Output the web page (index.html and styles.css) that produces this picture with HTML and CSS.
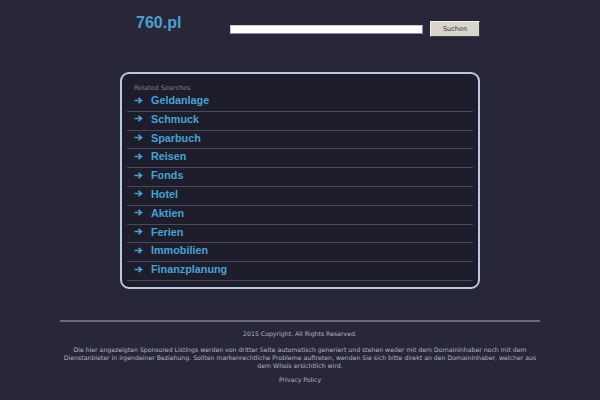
FILE: index.html
```html
<!DOCTYPE html>
<html>
<head>
<meta charset="utf-8">
<link rel="stylesheet" href="styles.css">
</head>
<body>
<div class="header">
  <div class="logo">760.pl</div>
  <input class="search" type="text">
  <button class="btn">Suchen</button>
</div>
<div class="box">
  <div class="label">Related Searches</div>
  <ul class="list">
    <li class="row"><svg class="arrow" viewBox="0 0 9 7"><path d="M0.5 3.5H7.5M4.5 0.8L7.5 3.5L4.5 6.2" fill="none" stroke="currentColor" stroke-width="1.6"/></svg><span>Geldanlage</span></li>
    <li class="row"><svg class="arrow" viewBox="0 0 9 7"><path d="M0.5 3.5H7.5M4.5 0.8L7.5 3.5L4.5 6.2" fill="none" stroke="currentColor" stroke-width="1.6"/></svg><span>Schmuck</span></li>
    <li class="row"><svg class="arrow" viewBox="0 0 9 7"><path d="M0.5 3.5H7.5M4.5 0.8L7.5 3.5L4.5 6.2" fill="none" stroke="currentColor" stroke-width="1.6"/></svg><span>Sparbuch</span></li>
    <li class="row"><svg class="arrow" viewBox="0 0 9 7"><path d="M0.5 3.5H7.5M4.5 0.8L7.5 3.5L4.5 6.2" fill="none" stroke="currentColor" stroke-width="1.6"/></svg><span>Reisen</span></li>
    <li class="row"><svg class="arrow" viewBox="0 0 9 7"><path d="M0.5 3.5H7.5M4.5 0.8L7.5 3.5L4.5 6.2" fill="none" stroke="currentColor" stroke-width="1.6"/></svg><span>Fonds</span></li>
    <li class="row"><svg class="arrow" viewBox="0 0 9 7"><path d="M0.5 3.5H7.5M4.5 0.8L7.5 3.5L4.5 6.2" fill="none" stroke="currentColor" stroke-width="1.6"/></svg><span>Hotel</span></li>
    <li class="row"><svg class="arrow" viewBox="0 0 9 7"><path d="M0.5 3.5H7.5M4.5 0.8L7.5 3.5L4.5 6.2" fill="none" stroke="currentColor" stroke-width="1.6"/></svg><span>Aktien</span></li>
    <li class="row"><svg class="arrow" viewBox="0 0 9 7"><path d="M0.5 3.5H7.5M4.5 0.8L7.5 3.5L4.5 6.2" fill="none" stroke="currentColor" stroke-width="1.6"/></svg><span>Ferien</span></li>
    <li class="row"><svg class="arrow" viewBox="0 0 9 7"><path d="M0.5 3.5H7.5M4.5 0.8L7.5 3.5L4.5 6.2" fill="none" stroke="currentColor" stroke-width="1.6"/></svg><span>Immobilien</span></li>
    <li class="row"><svg class="arrow" viewBox="0 0 9 7"><path d="M0.5 3.5H7.5M4.5 0.8L7.5 3.5L4.5 6.2" fill="none" stroke="currentColor" stroke-width="1.6"/></svg><span>Finanzplanung</span></li>
  </ul>
</div>
<div class="footer">
  <div class="rule"></div>
  <p class="copy">2015 Copyright. All Rights Reserved.</p>
  <p class="disc">Die hier angezeigten Sponsored Listings werden von dritter Seite automatisch generiert und stehen weder mit dem Domaininhaber noch mit dem Dienstanbieter in irgendeiner Beziehung. Sollten markenrechtliche Probleme auftreten, wenden Sie sich bitte direkt an den Domaininhaber, welcher aus dem Whois ersichtlich wird.</p>
  <p class="privacy">Privacy Policy</p>
</div>
</body>
</html>
```
FILE: styles.css
```css
html, body {
  margin: 0;
  padding: 0;
  background: #282739;
  font-family: "DejaVu Sans", sans-serif;
}
.header {
  width: 360px;
  margin: 0 auto;
  padding-top: 14px;
  display: flex;
  align-items: flex-start;
}
.logo {
  margin-left: 16px;
  width: 94px;
  font-family: "Liberation Sans", Arial, sans-serif;
  font-weight: bold;
  font-size: 16px;
  line-height: 18px;
  color: #4b9fd0;
}
.search {
  box-sizing: border-box;
  width: 193px;
  height: 9px;
  margin: 11px 7px 0 0;
  padding: 0;
  border: 1px solid #8d8c98;
  border-top-color: #c8c8cc;
  border-left-color: #c8c8cc;
  background: #fff;
}
.btn {
  box-sizing: border-box;
  width: 50px;
  height: 16px;
  margin-top: 7px;
  padding: 0;
  border: 1px solid #f2f0ea;
  border-right-color: #3b3a48;
  border-bottom-color: #3b3a48;
  background: #d9d5cd;
  color: #333;
  font-family: "DejaVu Sans", sans-serif;
  font-size: 6.5px;
}
.box {
  box-sizing: border-box;
  width: 360px;
  margin: 35px auto 0;
  border: 2px solid #b7cbdd;
  border-radius: 9px;
  background: #1e1d2b;
  padding: 0 5px 6px;
}
.label {
  padding: 10px 0 1px 7px;
  font-size: 6.5px;
  line-height: 8px;
  color: #7e7d8a;
}
.list {
  list-style: none;
  margin: 0;
  padding: 0;
}
.row {
  box-sizing: border-box;
  height: 18.8px;
  border-bottom: 1px solid #4a495c;
  display: flex;
  align-items: flex-start;
  padding: 1px 0 0 7px;
  color: #47a2d2;
}
.arrow {
  width: 9px;
  height: 7px;
  margin: 2.5px 8px 0 0;
  flex: none;
}
.row span {
  font-family: "Liberation Sans", Arial, sans-serif;
  font-weight: bold;
  font-size: 10.8px;
  line-height: 12px;
}
.footer {
  width: 480px;
  margin: 31px auto 0;
  text-align: center;
  color: #b6b5c2;
  font-size: 6.2px;
  line-height: 8px;
}
.rule {
  height: 2px;
  background: #68677c;
}
.footer p {
  margin: 0;
}
.copy {
  padding-top: 8px;
}
.disc {
  padding-top: 8px;
}
.privacy {
  padding-top: 6px;
}
```
